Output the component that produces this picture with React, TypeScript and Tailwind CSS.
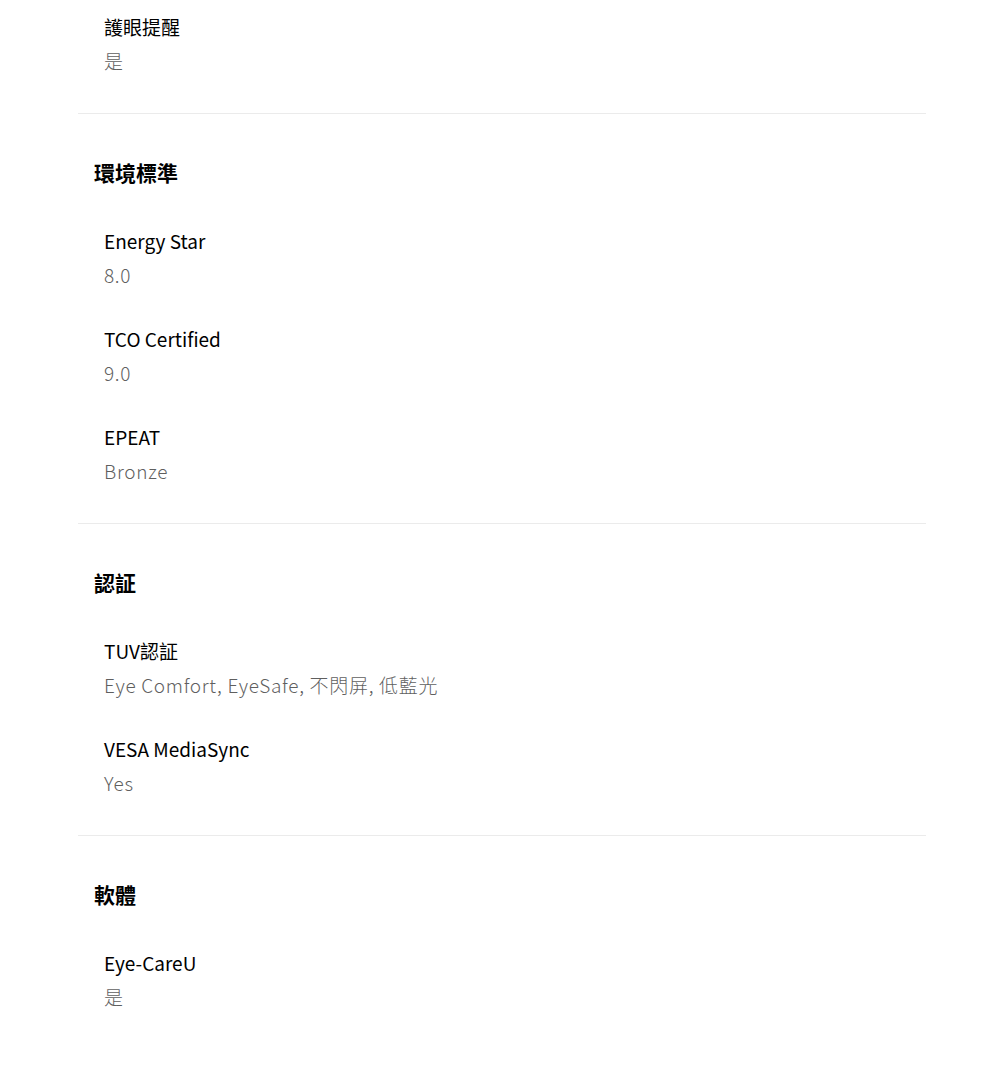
type Item = { label: string; value: string };
type Section = { title?: string; items: Item[] };

const sections: Section[] = [
  { items: [{ label: "護眼提醒", value: "是" }] },
  {
    title: "環境標準",
    items: [
      { label: "Energy Star", value: "8.0" },
      { label: "TCO Certified", value: "9.0" },
      { label: "EPEAT", value: "Bronze" },
    ],
  },
  {
    title: "認証",
    items: [
      { label: "TUV認証", value: "Eye Comfort, EyeSafe, 不閃屏, 低藍光" },
      { label: "VESA MediaSync", value: "Yes" },
    ],
  },
  { title: "軟體", items: [{ label: "Eye-CareU", value: "是" }] },
];

export default function App() {
  return (
    <div
      className="min-h-screen bg-white text-[#111] pt-[12px]"
      style={{ fontFamily: '"Noto Sans CJK TC", "Noto Sans", sans-serif' }}
    >
      <div className="w-[848px] ml-[78px]">
        {sections.map((section, i) => (
          <div
            key={i}
            className={
              i < sections.length - 1
                ? "border-b border-[#ebebeb] pb-[37px]"
                : "pb-[37px]"
            }
          >
            {section.title && (
              <h2 className="pl-[16px] pt-[42px] text-[21px] leading-[32px] font-bold text-black">
                {section.title}
              </h2>
            )}
            <div
              className={
                section.title
                  ? "flex flex-col gap-[34px] pl-[26px] pt-[38px]"
                  : "flex flex-col gap-[34px] pl-[26px]"
              }
            >
              {section.items.map((item) => (
                <div key={item.label} className="flex flex-col gap-[4px]">
                  <p className="text-[19px] leading-[30px] font-normal text-black">
                    {item.label}
                  </p>
                  <p className="text-[19px] leading-[30px] font-light text-[#5f5f5f] tracking-[0.7px]">
                    {item.value}
                  </p>
                </div>
              ))}
            </div>
          </div>
        ))}
      </div>
    </div>
  );
}
